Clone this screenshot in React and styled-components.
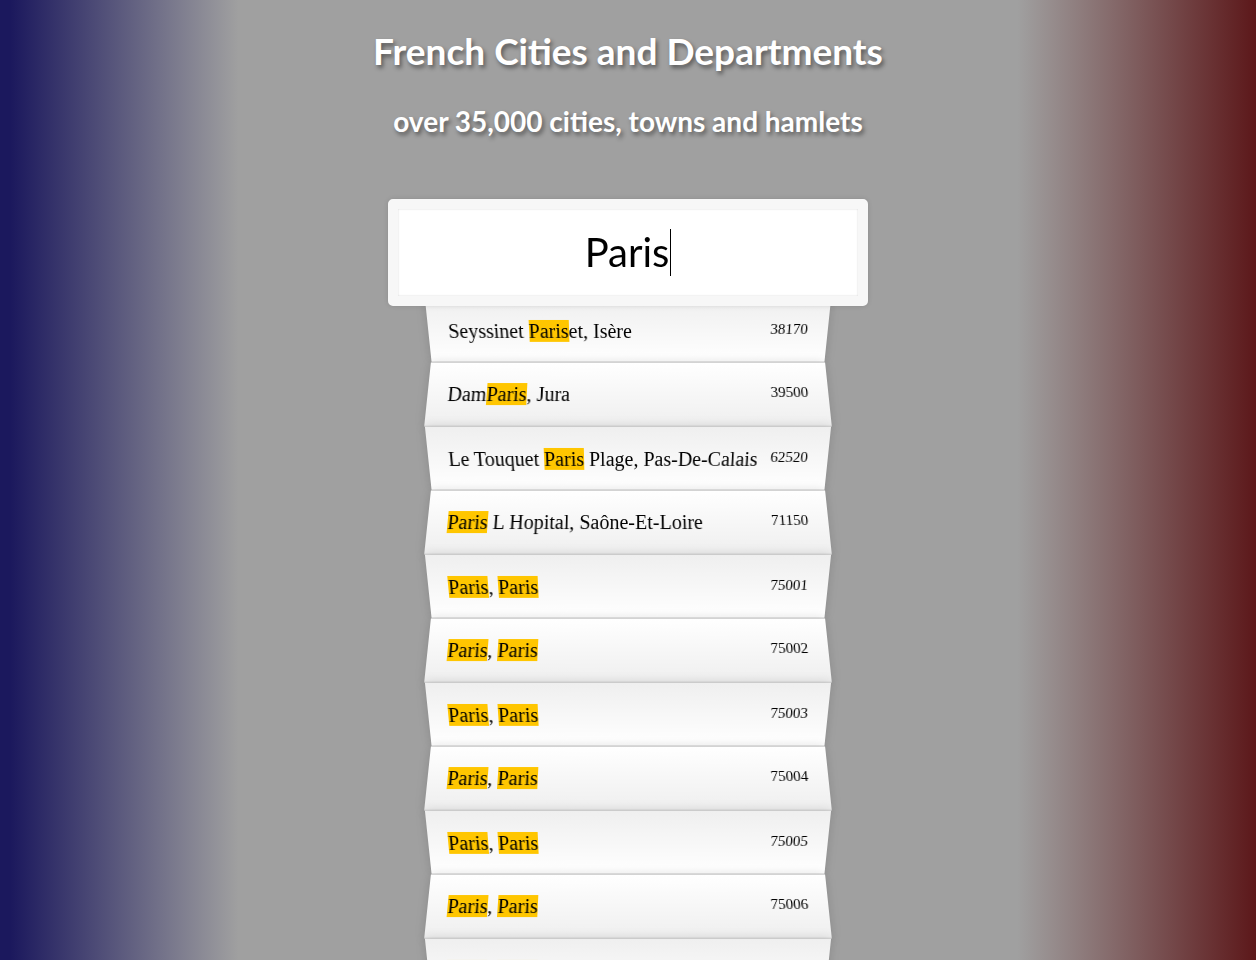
import React from 'react';
import styled, { createGlobalStyle } from 'styled-components';

const GlobalStyle = createGlobalStyle`
  html {
    box-sizing: border-box;
    height: 100%;
    overflow: hidden;
    background: linear-gradient(to right, #1b185d 0%, #1b185d 0.8%, #a0a0a0 19%, #a0a0a0 81%, #5c181a 100%);
    font-family: "Liberation Serif", "Times New Roman", serif;
    font-size: 20px;
  }
  *, *:before, *:after {
    box-sizing: inherit;
  }
  body {
    margin: 0;
  }
`;

const Header = styled.header`
  text-align: center;
  color: #fff;
  font-family: Lato, "Open Sans", sans-serif;
  font-weight: 700;
  text-shadow: 2px 3px 4px rgba(0, 0, 0, 0.45);
`;

const Title = styled.h1`
  margin: 31px 0 0;
  font-size: 37px;
  line-height: 40px;
`;

const Subtitle = styled.h2`
  margin: 34px 0 0;
  font-size: 28px;
  line-height: 32px;
`;

const SearchForm = styled.form`
  max-width: 400px;
  margin: 62px auto 0;
`;

const SearchBox = styled.div`
  position: relative;
  z-index: 2;
  margin: 0 -40px -10px;
  padding: 20px;
  background: #fff;
  border: 10px solid #f7f7f7;
  border-radius: 5px;
  box-shadow: 0 0 5px rgba(0, 0, 0, 0.12), inset 0 0 2px rgba(0, 0, 0, 0.19);
  text-align: center;
  font-family: Lato, "Open Sans", sans-serif;
  font-size: 40px;
  line-height: 47px;
  color: #000;
`;

const Caret = styled.span`
  display: inline-block;
  width: 1px;
  height: 47px;
  margin-left: 1px;
  background: #000;
  vertical-align: top;
`;

const Suggestions = styled.ul`
  margin: 0;
  padding: 0;
  position: relative;
`;

const Suggestion = styled.li`
  list-style: none;
  display: flex;
  justify-content: space-between;
  margin: 0;
  padding: 21px 20px 19px;
  border-bottom: 1px solid #d8d8d8;
  box-shadow: 0 0 10px rgba(0, 0, 0, 0.14);
  line-height: 23px;
  color: #000;
  background: ${({ even }) =>
    even
      ? 'linear-gradient(to bottom, #ffffff 0%, #efefef 100%)'
      : 'linear-gradient(to top, #ffffff 0%, #efefef 100%)'};
  transform: ${({ even }) =>
    even
      ? 'perspective(100px) rotateX(3deg) translateY(2px) scale(1.001)'
      : 'perspective(100px) rotateX(-3deg) translateY(3px)'};
`;

const Highlight = styled.span`
  background: #ffc600;
`;

const Postcode = styled.span`
  font-size: 15px;
  line-height: 18px;
  margin-left: 12px;
`;

const cities = [
  { name: ['Seyssinet ', '*Paris', 'et, Isère'], code: '38170' },
  { name: ['Dam', '*Paris', ', Jura'], code: '39500' },
  { name: ['Le Touquet ', '*Paris', ' Plage, Pas-De-Calais'], code: '62520' },
  { name: ['*Paris', ' L Hopital, Saône-Et-Loire'], code: '71150' },
  { name: ['*Paris', ', ', '*Paris'], code: '75001' },
  { name: ['*Paris', ', ', '*Paris'], code: '75002' },
  { name: ['*Paris', ', ', '*Paris'], code: '75003' },
  { name: ['*Paris', ', ', '*Paris'], code: '75004' },
  { name: ['*Paris', ', ', '*Paris'], code: '75005' },
  { name: ['*Paris', ', ', '*Paris'], code: '75006' },
  { name: ['*Paris', ', ', '*Paris'], code: '75007' },
  { name: ['*Paris', ', ', '*Paris'], code: '75008' },
];

const App = () => {
  return (
    <>
      <GlobalStyle />
      <Header>
        <Title>French Cities and Departments</Title>
        <Subtitle>over 35,000 cities, towns and hamlets</Subtitle>
      </Header>
      <SearchForm onSubmit={(e) => e.preventDefault()}>
        <SearchBox role="searchbox">
          Paris<Caret />
        </SearchBox>
        <Suggestions>
          {cities.map((city, index) => (
            <Suggestion key={city.code} even={index % 2 === 1}>
              <span>
                {city.name.map((part, i) =>
                  part.startsWith('*') ? (
                    <Highlight key={i}>{part.slice(1)}</Highlight>
                  ) : (
                    <React.Fragment key={i}>{part}</React.Fragment>
                  )
                )}
              </span>
              <Postcode>{city.code}</Postcode>
            </Suggestion>
          ))}
        </Suggestions>
      </SearchForm>
    </>
  );
};

export default App;
